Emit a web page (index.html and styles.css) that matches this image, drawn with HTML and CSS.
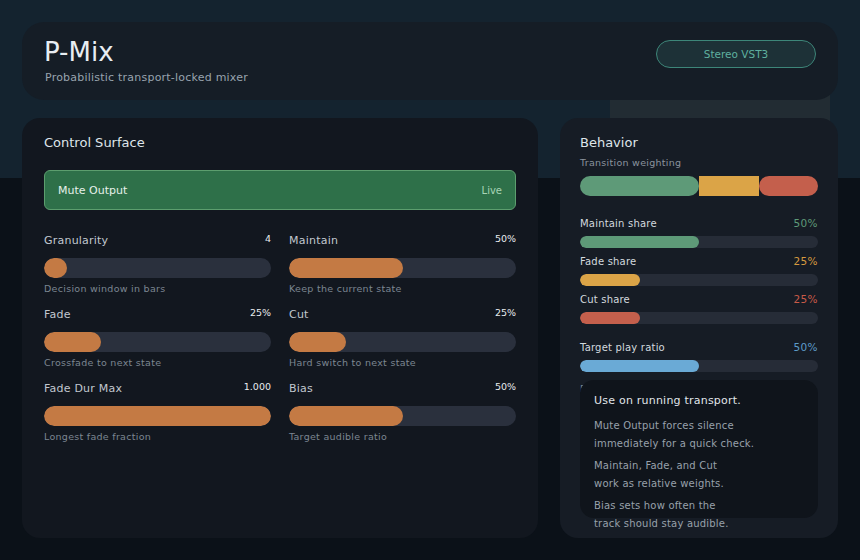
FILE: index.html
```html
<!DOCTYPE html>
<html lang="en">
  <head>
    <meta charset="UTF-8" />
    <meta name="viewport" content="width=device-width, initial-scale=1.0" />
    <title>P-Mix</title>
    <link rel="stylesheet" href="styles.css">
  </head>
  <body>
    <div class="page">
      <header class="header">
        <div>
          <h1 class="title">P-Mix</h1>
          <p class="subtitle">Probabilistic transport-locked mixer</p>
        </div>
        <span class="badge">Stereo VST3</span>
      </header>

      <main class="panels">
        <section class="card control">
          <h2 class="card-title">Control Surface</h2>
          <button class="mute">
            <span>Mute Output</span>
            <span class="mute-state">Live</span>
          </button>

          <div class="sliders">
            <div class="slider">
              <div class="slider-head"><span class="label">Granularity</span><span class="value">4</span></div>
              <div class="track"><div class="fill" style="width: 10%"></div></div>
              <div class="hint">Decision window in bars</div>
            </div>
            <div class="slider">
              <div class="slider-head"><span class="label">Maintain</span><span class="value">50%</span></div>
              <div class="track"><div class="fill" style="width: 50%"></div></div>
              <div class="hint">Keep the current state</div>
            </div>
            <div class="slider">
              <div class="slider-head"><span class="label">Fade</span><span class="value">25%</span></div>
              <div class="track"><div class="fill" style="width: 25%"></div></div>
              <div class="hint">Crossfade to next state</div>
            </div>
            <div class="slider">
              <div class="slider-head"><span class="label">Cut</span><span class="value">25%</span></div>
              <div class="track"><div class="fill" style="width: 25%"></div></div>
              <div class="hint">Hard switch to next state</div>
            </div>
            <div class="slider">
              <div class="slider-head"><span class="label">Fade Dur Max</span><span class="value">1.000</span></div>
              <div class="track"><div class="fill" style="width: 100%"></div></div>
              <div class="hint">Longest fade fraction</div>
            </div>
            <div class="slider">
              <div class="slider-head"><span class="label">Bias</span><span class="value">50%</span></div>
              <div class="track"><div class="fill" style="width: 50%"></div></div>
              <div class="hint">Target audible ratio</div>
            </div>
          </div>
        </section>

        <section class="card behavior">
          <h2 class="card-title">Behavior</h2>
          <div class="small">Transition weighting</div>
          <div class="stack">
            <div class="seg seg-maintain" style="width: 50%"></div>
            <div class="seg seg-fade" style="width: 25%"></div>
            <div class="seg seg-cut" style="width: 25%"></div>
          </div>

          <div class="share">
            <div class="share-head"><span>Maintain share</span><span class="pct green">50%</span></div>
            <div class="share-track"><div class="share-fill green-bg" style="width: 50%"></div></div>
          </div>
          <div class="share">
            <div class="share-head"><span>Fade share</span><span class="pct orange">25%</span></div>
            <div class="share-track"><div class="share-fill orange-bg" style="width: 25%"></div></div>
          </div>
          <div class="share">
            <div class="share-head"><span>Cut share</span><span class="pct red">25%</span></div>
            <div class="share-track"><div class="share-fill red-bg" style="width: 25%"></div></div>
          </div>
          <div class="share target">
            <div class="share-head"><span>Target play ratio</span><span class="pct blue">50%</span></div>
            <div class="share-track"><div class="share-fill blue-bg" style="width: 50%"></div></div>
            <div class="hint">Derived from Bias</div>
          </div>

          <div class="tip">
            <div class="tip-title">Use on running transport.</div>
            <p>Mute Output forces silence<br>immediately for a quick check.</p>
            <p>Maintain, Fade, and Cut<br>work as relative weights.</p>
            <p>Bias sets how often the<br>track should stay audible.</p>
          </div>
        </section>
      </main>
    </div>
  </body>
</html>
```

FILE: styles.css
```css
/* Colors */
:root {
  --band: #14232f;
  --base: #0b1118;
  --orange: #c47a44;
  --green: #5e9a78;
  --amber: #dba447;
  --red: #c45f4c;
  --blue: #6aaad6;
}

/* General Styles */
* {
  box-sizing: border-box;
}

body {
  margin: 0;
  font-family: "DejaVu Sans", sans-serif;
  color: #dfe5ea;
  background: linear-gradient(var(--band) 0, var(--band) 178px, var(--base) 178px);
  min-height: 560px;
}

.page {
  position: relative;
  padding: 22px;
}

/* grey block behind the behavior panel */
.page::before {
  content: "";
  position: absolute;
  left: 610px;
  top: 90px;
  width: 220px;
  height: 88px;
  background: #222c33;
}

.header {
  position: relative;
  display: flex;
  justify-content: space-between;
  align-items: flex-start;
  height: 78px;
  padding: 15px 22px;
  background: #151d26;
  border-radius: 22px;
}

.title {
  margin: 0;
  font-size: 26px;
  font-weight: normal;
  line-height: 30px;
  color: #e8edf2;
}

.subtitle {
  margin: 4px 0 0 1px;
  font-size: 11px;
  line-height: 14px;
  letter-spacing: 0.02em;
  color: #98a3ae;
}

.badge {
  display: flex;
  align-items: center;
  justify-content: center;
  width: 160px;
  height: 28px;
  margin-top: 3px;
  border: 1px solid #3d8679;
  border-radius: 14px;
  background: #1d3137;
  color: #5fb09f;
  font-size: 10.5px;
}

.panels {
  position: relative;
  display: flex;
  gap: 22px;
  margin-top: 18px;
}

.card {
  height: 420px;
  border-radius: 18px;
}

.card-title {
  margin: 0;
  font-size: 13px;
  font-weight: normal;
  line-height: 16px;
  color: #dfe5ea;
}

/* Control Surface */
.control {
  flex: 0 0 516px;
  padding: 17px 22px;
  background: #12171f;
}

.mute {
  display: flex;
  justify-content: space-between;
  align-items: center;
  width: 100%;
  height: 40px;
  margin-top: 19px;
  padding: 0 13px;
  background: #2e7049;
  border: 1px solid #5c9e6e;
  border-radius: 6px;
  color: #e6f0ea;
  font-family: inherit;
  font-size: 11px;
}

.mute-state {
  font-size: 10px;
  color: #a9d4b6;
}

.sliders {
  display: grid;
  grid-template-columns: 1fr 1fr;
  column-gap: 18px;
  row-gap: 12px;
  margin-top: 23px;
}

.slider-head {
  display: flex;
  justify-content: space-between;
  align-items: center;
  height: 14px;
}

.label {
  font-size: 11px;
  letter-spacing: 0.02em;
  color: #c1c8cf;
}

.value {
  font-size: 9.5px;
  color: #e8ebee;
  margin-top: -3px;
}

.track {
  height: 20px;
  margin-top: 11px;
  border-radius: 10px;
  background: #2a303d;
  overflow: hidden;
}

.fill {
  height: 100%;
  border-radius: 10px;
  background: var(--orange);
}

.hint {
  margin-top: 5px;
  font-size: 9.5px;
  line-height: 12px;
  letter-spacing: 0.03em;
  color: #7c8691;
}

/* Behavior */
.behavior {
  position: relative;
  flex: 1;
  padding: 17px 20px;
  background: #161c25;
}

.small {
  margin-top: 6px;
  font-size: 9.5px;
  line-height: 12px;
  letter-spacing: 0.03em;
  color: #8a939e;
}

.stack {
  display: flex;
  height: 20px;
  margin-top: 7px;
}

.seg {
  height: 100%;
}

.seg-maintain {
  background: var(--green);
  border-radius: 10px;
}

.seg-fade {
  background: var(--amber);
}

.seg-cut {
  background: var(--red);
  border-radius: 10px;
}

.share {
  margin-top: 6px;
}

.stack + .share {
  margin-top: 20px;
}

.share.target {
  margin-top: 16px;
}

.share-head {
  display: flex;
  justify-content: space-between;
  align-items: center;
  height: 14px;
  font-size: 10px;
  letter-spacing: 0.02em;
  color: #d3d9df;
}

.pct {
  font-size: 10.5px;
  letter-spacing: 0.04em;
}

.share-track {
  height: 12px;
  margin-top: 6px;
  border-radius: 6px;
  background: #262c37;
  overflow: hidden;
}

.share-fill {
  height: 100%;
  border-radius: 6px;
}

.green { color: #5e9a78; }
.orange { color: #d69a3f; }
.red { color: #c85a48; }
.blue { color: #5d9bc8; }

.green-bg { background: var(--green); }
.orange-bg { background: var(--amber); }
.red-bg { background: var(--red); }
.blue-bg { background: var(--blue); }

.target .hint {
  margin-top: 11px;
}

.tip {
  position: absolute;
  left: 20px;
  right: 20px;
  top: 262px;
  height: 138px;
  padding: 14px 14px;
  border-radius: 14px;
  background: #0f141b;
}

.tip-title {
  font-size: 11px;
  line-height: 14px;
  letter-spacing: 0.02em;
  color: #e0e5ea;
}

.tip p {
  margin: 4px 0 0;
  font-size: 10px;
  line-height: 18px;
  letter-spacing: 0.02em;
  color: #98a1ab;
}

.tip .tip-title + p {
  margin-top: 9px;
}
```
